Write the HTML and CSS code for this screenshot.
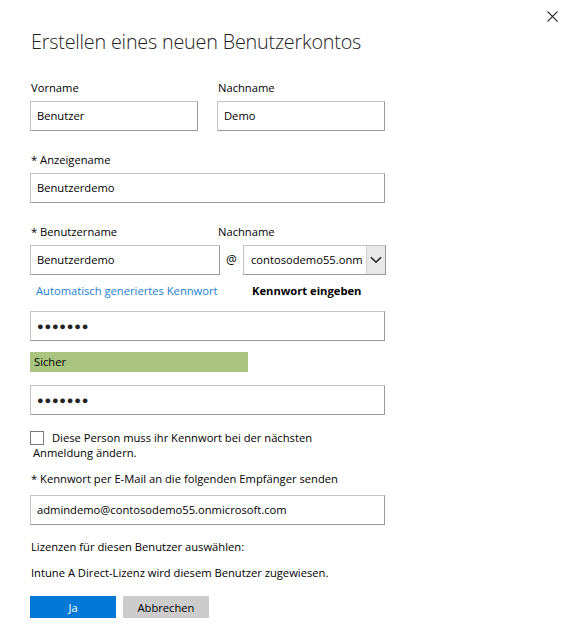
FILE: index.html
```html
<!DOCTYPE html>
<html lang="de">
<head>
<meta charset="utf-8">
<title>Erstellen eines neuen Benutzerkontos</title>
<link rel="stylesheet" href="styles.css">
</head>
<body>
<div class="dialog">
  <button class="close" aria-label="Schließen">
    <svg width="11" height="11" viewBox="0 0 11 11"><path d="M0.5 0.5 L10.5 10.5 M10.5 0.5 L0.5 10.5" stroke="#333" stroke-width="1.1" fill="none"/></svg>
  </button>
  <h1 class="title">Erstellen eines neuen Benutzerkontos</h1>

  <div class="row first">
    <div class="field half">
      <div class="label">Vorname</div>
      <div class="input">Benutzer</div>
    </div>
    <div class="field half">
      <div class="label">Nachname</div>
      <div class="input">Demo</div>
    </div>
  </div>

  <div class="field full group">
    <div class="label">* Anzeigename</div>
    <div class="input">Benutzerdemo</div>
  </div>

  <div class="row group">
    <div class="field user">
      <div class="label">* Benutzername</div>
      <div class="input">Benutzerdemo</div>
    </div>
    <div class="at">@</div>
    <div class="field domain">
      <div class="label shifted">Nachname</div>
      <div class="select">
        <span class="select-text">contosodemo55.onm</span>
        <span class="select-btn">
          <svg width="12" height="8" viewBox="0 0 12 8"><path d="M1 1.2 L6 6.2 L11 1.2" stroke="#222" stroke-width="1.6" fill="none"/></svg>
        </span>
      </div>
    </div>
  </div>

  <div class="pw-tabs">
    <span class="link">Automatisch generiertes Kennwort</span>
    <span class="active">Kennwort eingeben</span>
  </div>

  <div class="input full pw">&#9679;&#9679;&#9679;&#9679;&#9679;&#9679;&#9679;</div>
  <div class="strength">Sicher</div>
  <div class="input full pw">&#9679;&#9679;&#9679;&#9679;&#9679;&#9679;&#9679;</div>

  <p class="check"><span class="box"></span>Diese Person muss ihr Kennwort bei der nächsten<br>Anmeldung ändern.</p>

  <div class="label mail-label">* Kennwort per E-Mail an die folgenden Empfänger senden</div>
  <div class="input full">admindemo@contosodemo55.onmicrosoft.com</div>

  <p class="text lic">Lizenzen für diesen Benutzer auswählen:</p>
  <p class="text intune">Intune A Direct-Lizenz wird diesem Benutzer zugewiesen.</p>

  <div class="buttons">
    <button class="btn primary">Ja</button>
    <button class="btn secondary">Abbrechen</button>
  </div>
</div>
</body>
</html>
```

FILE: styles.css
```css
* { box-sizing: border-box; }
html, body { margin: 0; padding: 0; background: #fff; }
body {
  font-family: "Open Sans", "Noto Sans", "Liberation Sans", sans-serif;
  font-size: 11.2px;
  color: #000;
}
.dialog {
  position: relative;
  width: 577px;
  height: 631px;
  padding: 28px 0 0 30px;
}
.close {
  position: absolute;
  top: 11px;
  left: 547px;
  width: 11px;
  height: 11px;
  padding: 0;
  border: 0;
  background: none;
  display: block;
}
.close svg { display: block; }
.title {
  margin: 0 0 0 1px;
  font-weight: 300;
  font-size: 19.8px;
  line-height: 28px;
  color: #222;
  letter-spacing: -0.2px;
}
.row { display: flex; align-items: flex-end; }
.row.first { margin-top: 24px; }
.group { margin-top: 21px; }
.field { display: flex; flex-direction: column; }
.half { width: 168px; }
.half + .half { margin-left: 19px; }
.label {
  height: 16px;
  line-height: 16px;
  margin: 0 0 5px 1px;
  white-space: nowrap;
}
.label.shifted { margin-left: -25px; }
.input {
  height: 30px;
  line-height: 28px;
  padding: 0 6px;
  border: 1px solid;
  border-color: #c3c3c3 #9a9a9a #9a9a9a #c3c3c3;
  background: #fff;
  white-space: nowrap;
  overflow: hidden;
}
.full { width: 355px; }
.user { width: 190px; }
.at {
  width: 23px;
  height: 30px;
  line-height: 30px;
  text-align: center;
  font-size: 12px;
}
.domain { width: 143px; }
.select {
  display: flex;
  height: 30px;
  border: 1px solid;
  border-color: #c3c3c3 #9a9a9a #9a9a9a #c3c3c3;
}
.select-text {
  flex: 1;
  line-height: 28px;
  padding-left: 7px;
  white-space: nowrap;
  overflow: hidden;
}
.select-btn {
  width: 19px;
  background: #e8e8e8;
  border-left: 1px solid #d0d0d0;
  display: flex;
  align-items: center;
  justify-content: center;
}
.select-btn svg { display: block; }
.pw-tabs {
  display: flex;
  height: 16px;
  line-height: 16px;
  margin-top: 8px;
}
.link { color: #1a7fd0; margin-left: 6px; width: 216px; }
.active { font-weight: 700; }
.pw { margin-top: 12px; font-size: 11px; letter-spacing: 0.8px; color: #222; }
.strength {
  width: 218px;
  height: 20px;
  line-height: 19px;
  margin-top: 11px;
  padding-left: 4px;
  background: #a9c47e;
}
.strength + .pw { margin-top: 13px; }
.check {
  margin: 15px 0 0 0;
  padding-left: 3px;
  line-height: 15px;
}
.box {
  display: inline-block;
  width: 14px;
  height: 14px;
  border: 1px solid #7a7a7a;
  background: #fff;
  margin: 0 8px 0 -3px;
  vertical-align: -3px;
}
.mail-label { margin: 11px 0 8px 1px; }
.text { margin: 0 0 0 1px; height: 16px; line-height: 16px; }
.lic { margin-top: 14px; }
.intune { margin-top: 10px; }
.buttons { display: flex; margin-top: 15px; }
.btn {
  width: 86px;
  height: 22px;
  border: 0;
  padding: 0;
  font-family: inherit;
  font-size: 11.2px;
}
.primary { background: #0078d7; color: #fff; }
.secondary { background: #cccccc; color: #000; margin-left: 7px; }
```
